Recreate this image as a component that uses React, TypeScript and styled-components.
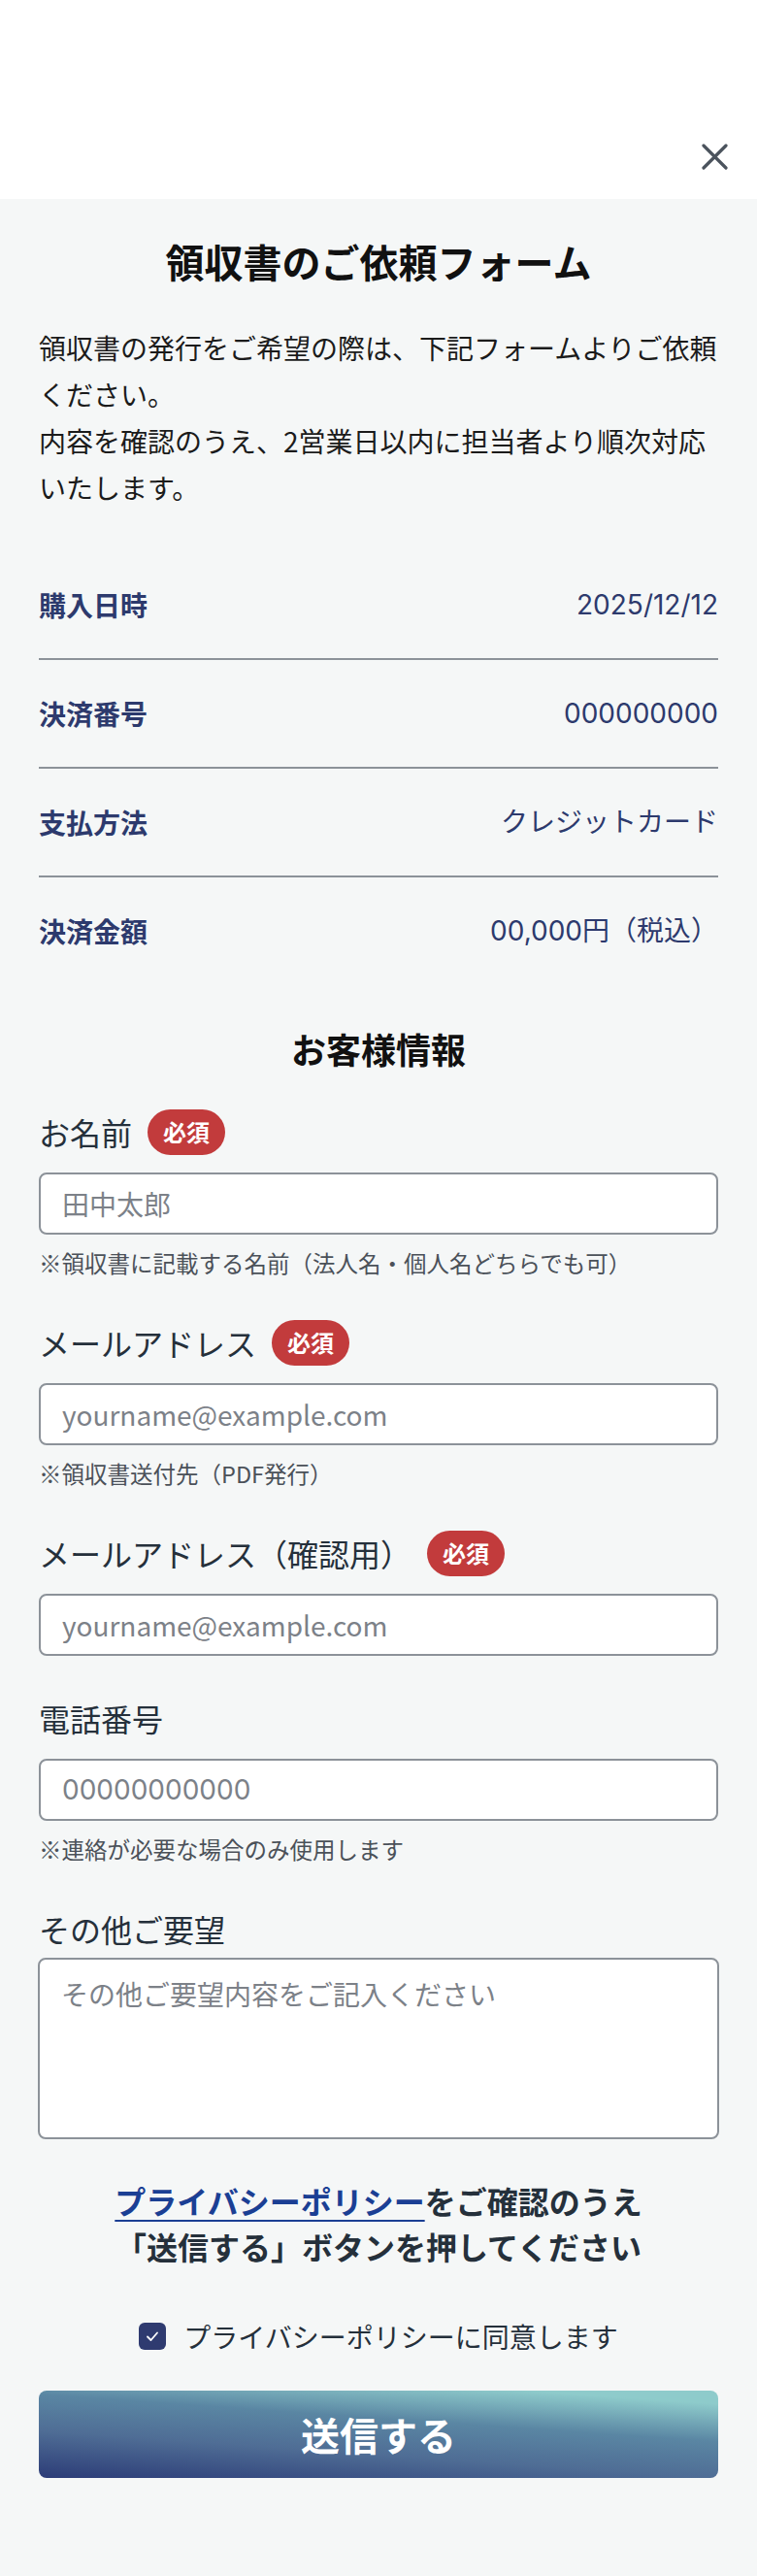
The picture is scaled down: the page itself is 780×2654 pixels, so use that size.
import React from "react";
import styled, { createGlobalStyle } from "styled-components";

const GlobalStyle = createGlobalStyle`
  html, body {
    margin: 0;
    padding: 0;
    background: #f5f7f7;
  }
  body {
    font-family: "Noto Sans CJK JP", "Noto Sans", sans-serif;
    -webkit-font-smoothing: antialiased;
  }
  *, *::before, *::after { box-sizing: border-box; }
`;

const numericFont = `Inter, "Noto Sans CJK JP", sans-serif`;

const Page = styled.div`
  width: 780px;
  min-height: 2654px;
  background: #f5f7f7;
`;

const TopBar = styled.header`
  height: 205px;
  background: #ffffff;
  display: flex;
  justify-content: flex-end;
  align-items: flex-end;
  padding: 0 30px 30px 0;
`;

const CloseButton = styled.button`
  width: 27px;
  height: 27px;
  padding: 0;
  border: none;
  background: transparent;
  cursor: pointer;
  display: block;
  svg { display: block; }
`;

const Main = styled.main`
  padding: 34px 40px 102px;
`;

const Title = styled.h1`
  margin: 0;
  font-size: 40px;
  font-weight: 700;
  line-height: 60px;
  color: #111111;
  text-align: center;
`;

const Lead = styled.p`
  margin: 35px 0 0;
  font-size: 28px;
  line-height: 48px;
  color: #1b1b1b;
  span { display: block; white-space: nowrap; }
`;

const InfoList = styled.dl`
  margin: 42px 0 0;
`;

const InfoRow = styled.div`
  display: flex;
  justify-content: space-between;
  align-items: center;
  padding: 34px 0;
  border-bottom: 2px solid #8c9299;
  &:last-child { border-bottom: none; }
`;

const Term = styled.dt`
  font-size: 28px;
  line-height: 42px;
  font-weight: 700;
  color: #2d3a6d;
`;

const Desc = styled.dd`
  margin: 0;
  font-family: ${numericFont};
  font-size: 28px;
  line-height: 42px;
  color: #2d3a6d;
`;

const SectionTitle = styled.h2`
  margin: 39px 0 0;
  font-size: 36px;
  line-height: 54px;
  font-weight: 700;
  color: #111111;
  text-align: center;
`;

const Form = styled.form`
  margin-top: 35px;
  display: flex;
  flex-direction: column;
`;

const Fields = styled.div`
  display: flex;
  flex-direction: column;
  gap: 40px;
`;

const Field = styled.div`
  display: flex;
  flex-direction: column;
`;

const LabelRow = styled.label`
  display: flex;
  align-items: center;
  gap: 16px;
  height: 48px;
  font-size: 32px;
  line-height: 48px;
  color: #25303b;
`;

const Badge = styled.span`
  display: inline-flex;
  align-items: center;
  justify-content: center;
  height: 47px;
  padding: 0 16px;
  border-radius: 24px;
  background: #c23b3c;
  color: #ffffff;
  font-size: 24px;
  font-weight: 700;
  line-height: 1;
`;

const TextInput = styled.input<{ $numeric?: boolean }>`
  margin-top: 18px;
  height: 64px;
  width: 100%;
  border: 2px solid #8c9299;
  border-radius: 8px;
  background: #ffffff;
  padding: 0 22px;
  font-family: ${(p) => (p.$numeric ? numericFont : "inherit")};
  font-size: 28px;
  color: #25303b;
  outline: none;
  &::placeholder { color: #7c8188; }
`;

const TextArea = styled.textarea`
  margin: 6px -1px 0;
  width: 702px;
  height: 187px;
  border: 2px solid #8c9299;
  border-radius: 8px;
  background: #ffffff;
  padding: 14px 22px;
  font-family: inherit;
  font-size: 28px;
  line-height: 42px;
  color: #25303b;
  resize: none;
  outline: none;
  &::placeholder { color: #7c8188; }
`;

const Hint = styled.p`
  margin: 12px 0 0;
  font-size: 23.5px;
  line-height: 35px;
  color: #4b5159;
`;

const Notice = styled.p`
  margin: 40px 0 0;
  text-align: center;
  font-size: 32px;
  line-height: 47px;
  font-weight: 700;
  color: #25303b;
  a {
    color: #1b3f94;
    text-decoration: underline;
    text-decoration-thickness: 2px;
    text-underline-offset: 6px;
  }
`;

const AgreeRow = styled.label`
  margin-top: 48px;
  display: flex;
  justify-content: center;
  align-items: center;
  gap: 18px;
  font-size: 28px;
  line-height: 42px;
  color: #25303b;
  cursor: pointer;
`;

const HiddenCheck = styled.input`
  position: absolute;
  opacity: 0;
  width: 1px;
  height: 1px;
  margin: 0;
`;

const CheckBox = styled.span`
  width: 28px;
  height: 28px;
  border-radius: 6px;
  background: #2f3b70;
  display: inline-flex;
  align-items: center;
  justify-content: center;
  flex-shrink: 0;
`;

const SubmitButton = styled.button`
  margin-top: 35px;
  width: 100%;
  height: 90px;
  border: none;
  border-radius: 8px;
  background: linear-gradient(4deg, #2c3c77 0%, #4f6d95 35%, #5a86a3 62%, #8ecbcb 90%);
  color: #ffffff;
  font-family: inherit;
  font-size: 40px;
  font-weight: 700;
  cursor: pointer;
`;

const infoRows = [
  { term: "購入日時", value: "2025/12/12" },
  { term: "決済番号", value: "000000000" },
  { term: "支払方法", value: "クレジットカード" },
  { term: "決済金額", value: "00,000円（税込）" },
];

export default function App() {
  return (
    <>
      <GlobalStyle />
      <Page>
        <TopBar>
          <CloseButton aria-label="閉じる">
            <svg width="27" height="27" viewBox="0 0 27 27" fill="none">
              <path d="M2 2L25 25M25 2L2 25" stroke="#4b535d" strokeWidth="3.2" strokeLinecap="round" />
            </svg>
          </CloseButton>
        </TopBar>
        <Main>
          <Title>領収書のご依頼フォーム</Title>
          <Lead>
            <span>領収書の発行をご希望の際は、下記フォームよりご依頼</span>
            <span>ください。</span>
            <span>内容を確認のうえ、2営業日以内に担当者より順次対応</span>
            <span>いたします。</span>
          </Lead>
          <InfoList>
            {infoRows.map((r) => (
              <InfoRow key={r.term}>
                <Term>{r.term}</Term>
                <Desc>{r.value}</Desc>
              </InfoRow>
            ))}
          </InfoList>
          <SectionTitle>お客様情報</SectionTitle>
          <Form onSubmit={(e) => e.preventDefault()}>
            <Fields>
              <Field>
                <LabelRow htmlFor="name">
                  お名前<Badge>必須</Badge>
                </LabelRow>
                <TextInput id="name" placeholder="田中太郎" />
                <Hint>※領収書に記載する名前（法人名・個人名どちらでも可）</Hint>
              </Field>
              <Field>
                <LabelRow htmlFor="mail">
                  メールアドレス<Badge>必須</Badge>
                </LabelRow>
                <TextInput id="mail" type="email" placeholder="yourname@example.com" />
                <Hint>※領収書送付先（PDF発行）</Hint>
              </Field>
              <Field>
                <LabelRow htmlFor="mail2">
                  メールアドレス（確認用）<Badge>必須</Badge>
                </LabelRow>
                <TextInput id="mail2" type="email" placeholder="yourname@example.com" />
              </Field>
              <Field>
                <LabelRow htmlFor="tel">電話番号</LabelRow>
                <TextInput id="tel" type="tel" $numeric placeholder="00000000000" />
                <Hint>※連絡が必要な場合のみ使用します</Hint>
              </Field>
              <Field>
                <LabelRow htmlFor="other">その他ご要望</LabelRow>
                <TextArea id="other" placeholder="その他ご要望内容をご記入ください" />
              </Field>
            </Fields>
            <Notice>
              <a href="#privacy">プライバシーポリシー</a>をご確認のうえ
              <br />
              「送信する」ボタンを押してください
            </Notice>
            <AgreeRow>
              <HiddenCheck type="checkbox" defaultChecked />
              <CheckBox>
                <svg width="16" height="16" viewBox="0 0 16 16" fill="none">
                  <path d="M3 8.5L6.5 12L13 4.5" stroke="#ffffff" strokeWidth="1.8" strokeLinecap="round" strokeLinejoin="round" />
                </svg>
              </CheckBox>
              プライバシーポリシーに同意します
            </AgreeRow>
            <SubmitButton type="submit">送信する</SubmitButton>
          </Form>
        </Main>
      </Page>
    </>
  );
}
